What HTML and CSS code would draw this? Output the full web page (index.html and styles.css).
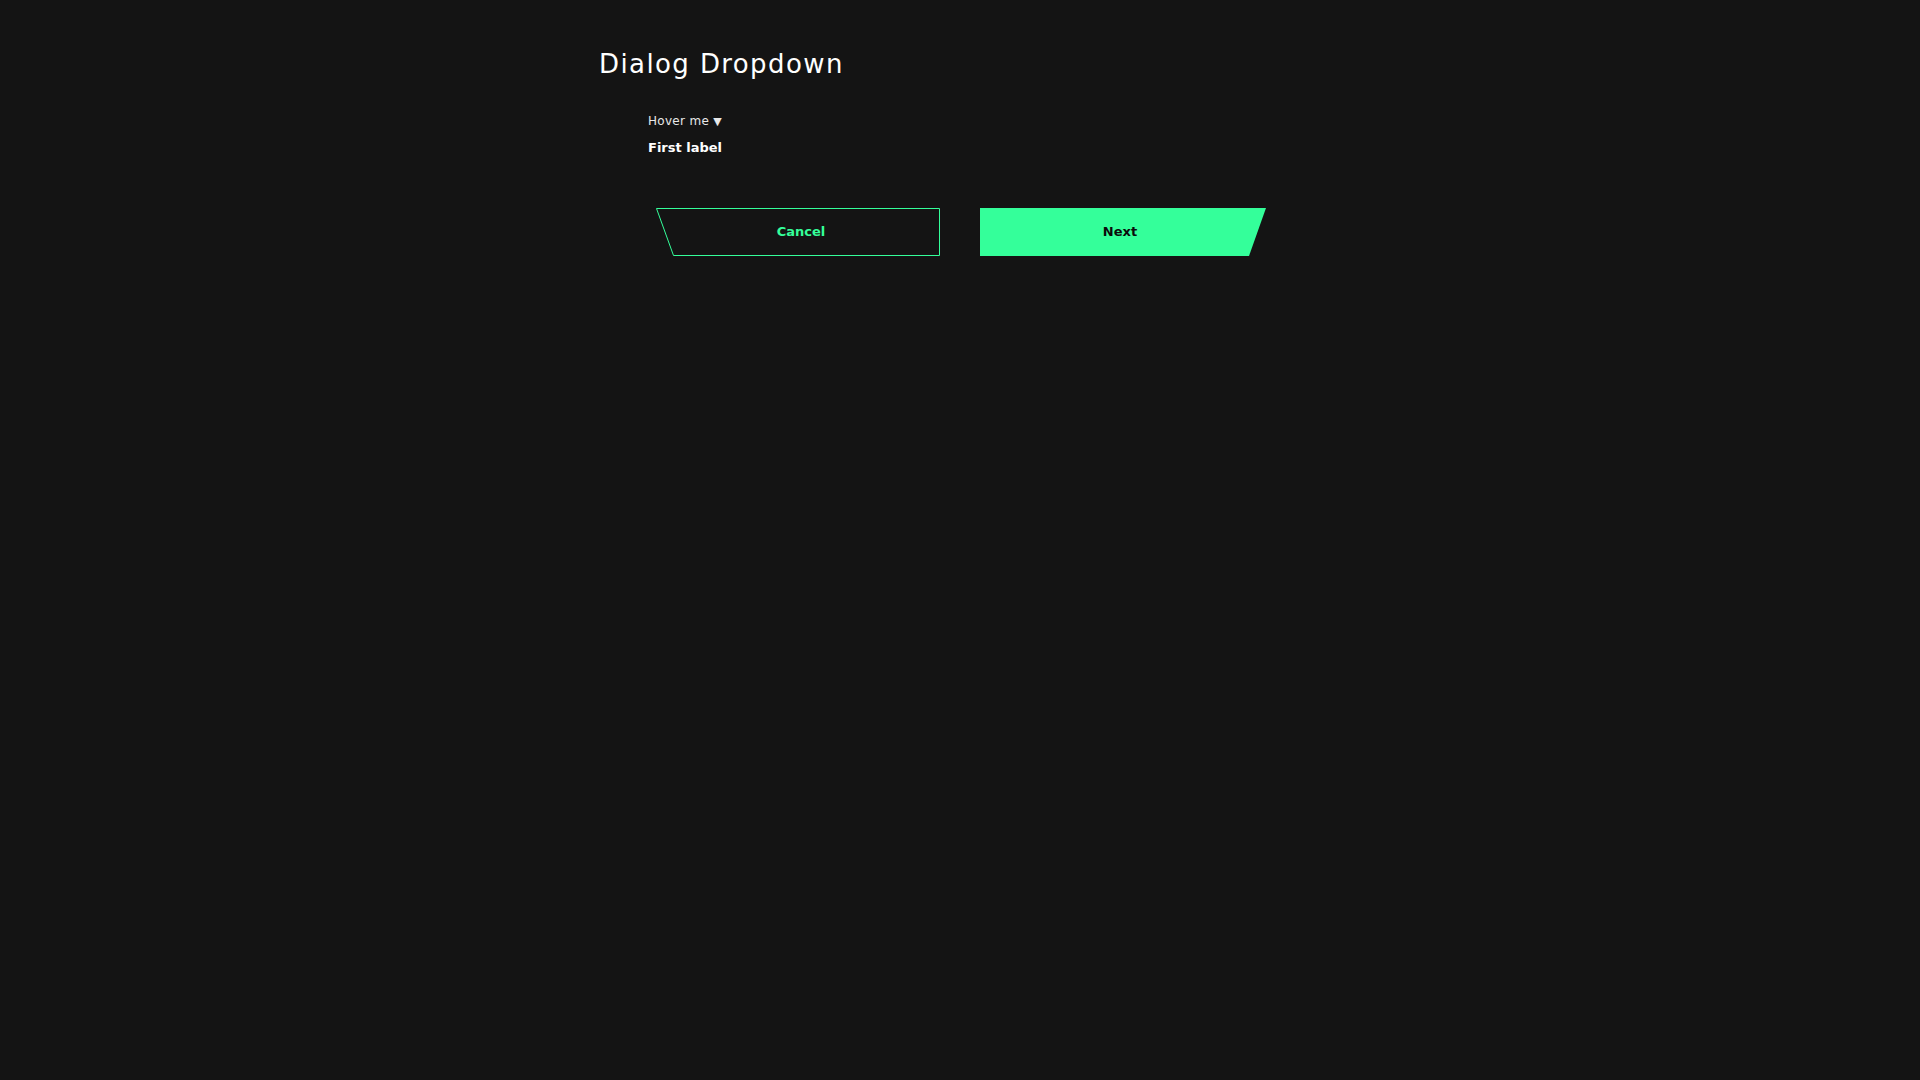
FILE: index.html
```html
<!DOCTYPE html>
<html>
<head>
<meta charset="utf-8">
<link rel="stylesheet" href="styles.css">
</head>
<body>
<main class="page">
  <h1 class="title">Dialog Dropdown</h1>
  <div class="dropdown">
    <div class="trigger">Hover me <span class="caret">▼</span></div>
    <div class="label">First label</div>
  </div>
  <div class="actions">
    <button class="btn btn-cancel">
      <svg class="shape" width="284" height="48" viewBox="0 0 284 48"><polygon points="0.5,0.5 283.5,0.5 283.5,47.5 17.5,47.5" fill="none" stroke="#34ff9a" stroke-width="1"/></svg>
      <span class="btn-text">Cancel</span>
    </button>
    <button class="btn btn-next">
      <svg class="shape" width="286" height="48" viewBox="0 0 286 48"><polygon points="0,0 286,0 269,48 0,48" fill="#34ff9a"/></svg>
      <span class="btn-text">Next</span>
    </button>
  </div>
</main>
</body>
</html>
```
FILE: styles.css
```css
html, body {
  margin: 0;
  padding: 0;
  background: #141414;
  height: 100%;
}
body {
  font-family: "DejaVu Sans", "Noto Sans", sans-serif;
  color: #ffffff;
}
.page {
  padding-left: 599px;
  padding-top: 49px;
}
.title {
  margin: 0;
  font-size: 26px;
  font-weight: 400;
  line-height: 30px;
  letter-spacing: 1.4px;
  color: #ffffff;
}
.dropdown {
  margin-left: 49px;
  margin-top: 34px;
}
.trigger {
  font-size: 12px;
  line-height: 16px;
  letter-spacing: 0.3px;
  color: #e8e8e8;
}
.caret {
  font-size: 11px;
}
.label {
  margin-top: 10px;
  font-size: 13px;
  font-weight: 700;
  line-height: 16px;
}
.actions {
  display: flex;
  gap: 40px;
  margin-left: 57px;
  margin-top: 52px;
}
.btn {
  position: relative;
  height: 48px;
  border: 0;
  padding: 0 0 2px 0;
  background: transparent;
  font-family: inherit;
  font-size: 13px;
  font-weight: 700;
  cursor: pointer;
  display: flex;
  align-items: center;
  justify-content: center;
}
.btn-cancel {
  width: 284px;
  color: #34ff9a;
}
.btn-next {
  width: 286px;
  color: #0b0b0b;
}
.shape {
  position: absolute;
  left: 0;
  top: 0;
}
.btn-text {
  position: relative;
}
.btn-cancel .btn-text { left: 3px; }
.btn-next .btn-text { left: -3px; }
```
